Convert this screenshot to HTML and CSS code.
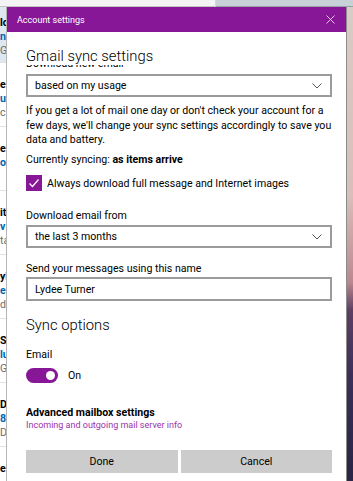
FILE: index.html
```html
<!DOCTYPE html>
<html>
<head>
	<link rel="stylesheet" href="styles.css">
</head>
<body>
	<div class="app">
		<div class="mail-list">
			<div class="list-top"></div>
			<div class="mail-item selected">
				<div class="from">lc</div>
				<div class="subject">ni</div>
				<div class="preview">G</div>
			</div>
			<div class="mail-item">
				<div class="from">e</div>
				<div class="subject">u</div>
				<div class="preview">c</div>
			</div>
			<div class="mail-item">
				<div class="from">er</div>
				<div class="subject">o</div>
			</div>
			<div class="mail-item">
				<div class="from">it</div>
				<div class="subject">v</div>
				<div class="preview">ta</div>
			</div>
			<div class="mail-item">
				<div class="from">yl</div>
				<div class="subject">ec</div>
				<div class="preview">d</div>
			</div>
			<div class="mail-item">
				<div class="from">S</div>
				<div class="subject">lu</div>
				<div class="preview">G</div>
			</div>
			<div class="mail-item">
				<div class="from">D</div>
				<div class="subject">8</div>
				<div class="preview">D</div>
			</div>
			<div class="mail-item last">
				<div class="from">e</div>
			</div>
		</div>
		<div class="reading">
			<div class="reading-top"></div>
			<div class="reading-photo"></div>
		</div>
	</div>

	<!-- account settings dialog over the mail app -->
	<div class="dialog">
		<div class="titlebar">
			<span>Account settings</span>
			<svg class="close" width="9" height="9" viewBox="0 0 9 9">
				<path d="M0.5 0.5 L8.5 8.5 M8.5 0.5 L0.5 8.5" stroke="#e6c8ec" stroke-width="1" fill="none"/>
			</svg>
		</div>
		<div class="dialog-body">
			<div class="heading">Gmail sync settings</div>
			<div class="scroll">
				<div class="label cut">Download new email</div>
				<div class="select">
					<span>based on my usage</span>
					<svg width="10" height="6" viewBox="0 0 10 6"><path d="M0.5 0.5 L5 5 L9.5 0.5" stroke="#555" stroke-width="1" fill="none"/></svg>
				</div>
				<p class="paragraph">If you get a lot of mail one day or don't check your account for a few days, we'll change your sync settings accordingly to save you data and battery.</p>
				<div class="label status">Currently syncing: <b>as items arrive</b></div>
				<div class="check-row">
					<div class="checkbox">
						<svg width="16" height="16" viewBox="0 0 16 16"><path d="M3.5 8.5 L6.5 11.5 L12.5 4.5" stroke="#fff" stroke-width="1.2" fill="none"/></svg>
					</div>
					<span>Always download full message and Internet images</span>
				</div>
				<div class="label from-label">Download email from</div>
				<div class="select select-two">
					<span>the last 3 months</span>
					<svg width="10" height="6" viewBox="0 0 10 6"><path d="M0.5 0.5 L5 5 L9.5 0.5" stroke="#555" stroke-width="1" fill="none"/></svg>
				</div>
				<div class="label name-label">Send your messages using this name</div>
				<div class="textbox">Lydee Turner</div>
				<div class="heading sub">Sync options</div>
				<div class="label email-label">Email</div>
				<div class="toggle-row">
					<div class="toggle"><div class="knob"></div></div>
					<span>On</span>
				</div>
				<div class="advanced">Advanced mailbox settings</div>
				<a class="advanced-link" href="#">Incoming and outgoing mail server info</a>
				<div class="buttons">
					<button class="btn">Done</button>
					<button class="btn">Cancel</button>
				</div>
			</div>
		</div>
	</div>
</body>
</html>
```
FILE: styles.css
```css
html, body {
	margin: 0;
	padding: 0;
	width: 100%;
	height: 100%;
	overflow: hidden;
}
body {
	font-family: Roboto, "Noto Sans", sans-serif;
	font-size: 10.6px;
	color: #000;
	position: relative;
}

/* background mail app */
.app {
	display: flex;
	height: 100%;
}
.mail-list {
	width: 215px;
	background: #fff;
	border-right: 1px solid #d6d6d6;
	overflow: hidden;
}
.list-top {
	height: 6px;
	background: #f4f4f4;
	border-bottom: 1px solid #c4c4c4;
}
.mail-item {
	height: 48px;
	padding-top: 15px;
	border-bottom: 1px solid #e2e2e2;
	line-height: 14px;
}
.mail-item.selected {
	height: 46px;
	padding-top: 9px;
	background: #dfe8f0;
}
.mail-item.last {
	height: auto;
	border-bottom: none;
}
.from {
	font-weight: 700;
}
.subject {
	font-weight: 700;
	color: #0063b1;
}
.preview {
	color: #6b6b6b;
}
.reading {
	flex: 1;
	display: flex;
	flex-direction: column;
}
.reading-top {
	height: 6px;
	background: #c9d1d8;
	border-bottom: 1px solid #9aa1a6;
}
.reading-photo {
	flex: 1;
	background: linear-gradient(180deg, #d9cbc6 0%, #d8bfb9 40%, #bb8890 58%, #5d3f62 64%, #3a2f58 78%, #2a2542 100%);
}

/* dialog */
.dialog {
	position: absolute;
	left: 7px;
	top: 7px;
	bottom: 0;
	width: 339px;
	background: #fff;
	border-right: 1px solid #8c8c8c;
	box-shadow: -1px 0 0 #b5b5b5;
}
.titlebar {
	height: 25px;
	background: #881798;
	color: #fff;
	font-size: 9px;
	display: flex;
	align-items: center;
	justify-content: space-between;
	padding: 0 10px 0 10px;
}
.close {
	margin-right: 1px;
}
.dialog-body {
	padding: 15px 14px 0 19px;
}
.heading {
	font-size: 14.8px;
	font-weight: 300;
	line-height: 18px;
	position: relative;
	z-index: 1;
	background: #fff;
}
.scroll {
	overflow: hidden;
}
.label {
	line-height: 15px;
}
.label.cut {
	margin-top: -9px;
}
.select {
	height: 19px;
	margin-top: 3px;
	border: 2px solid #9b9b9b;
	display: flex;
	align-items: center;
	justify-content: space-between;
	padding: 0 8px 0 7px;
}
.paragraph {
	margin: 7px 0 0 0;
	line-height: 14.5px;
}
.status {
	margin-top: 4px;
}
.status b {
	font-weight: 700;
}
.check-row {
	display: flex;
	align-items: center;
	gap: 5px;
	margin-top: 8.5px;
	height: 16px;
}
.checkbox {
	width: 16px;
	height: 16px;
	background: #881798;
}
.checkbox svg {
	display: block;
}
.from-label {
	margin-top: 16.5px;
}
.select-two {
	margin-top: 2.5px;
}
.name-label {
	margin-top: 12.5px;
}
.textbox {
	height: 20px;
	margin-top: 1.5px;
	border: 2px solid #9b9b9b;
	padding: 0 7px;
	display: flex;
	align-items: center;
}
.heading.sub {
	margin-top: 14px;
	line-height: 20px;
}
.email-label {
	margin-top: 11.5px;
}
.toggle-row {
	display: flex;
	align-items: center;
	gap: 10px;
	height: 16px;
	margin-top: 5.5px;
}
.toggle {
	width: 32px;
	height: 15px;
	border-radius: 8px;
	background: #881798;
	display: flex;
	align-items: center;
	justify-content: flex-end;
	padding-right: 3px;
	box-sizing: border-box;
}
.knob {
	width: 9px;
	height: 9px;
	border-radius: 50%;
	background: #fff;
}
.advanced {
	margin-top: 23px;
	font-weight: 700;
	line-height: 13px;
}
.advanced-link {
	display: block;
	font-size: 9px;
	line-height: 12px;
	color: #9b30ab;
	text-decoration: none;
}
.buttons {
	display: flex;
	gap: 3px;
	margin-top: 19px;
}
.btn {
	flex: 1;
	height: 23px;
	border: none;
	background: #cccccc;
	font-family: inherit;
	font-size: 10.6px;
	color: #000;
	padding: 0;
}
```
